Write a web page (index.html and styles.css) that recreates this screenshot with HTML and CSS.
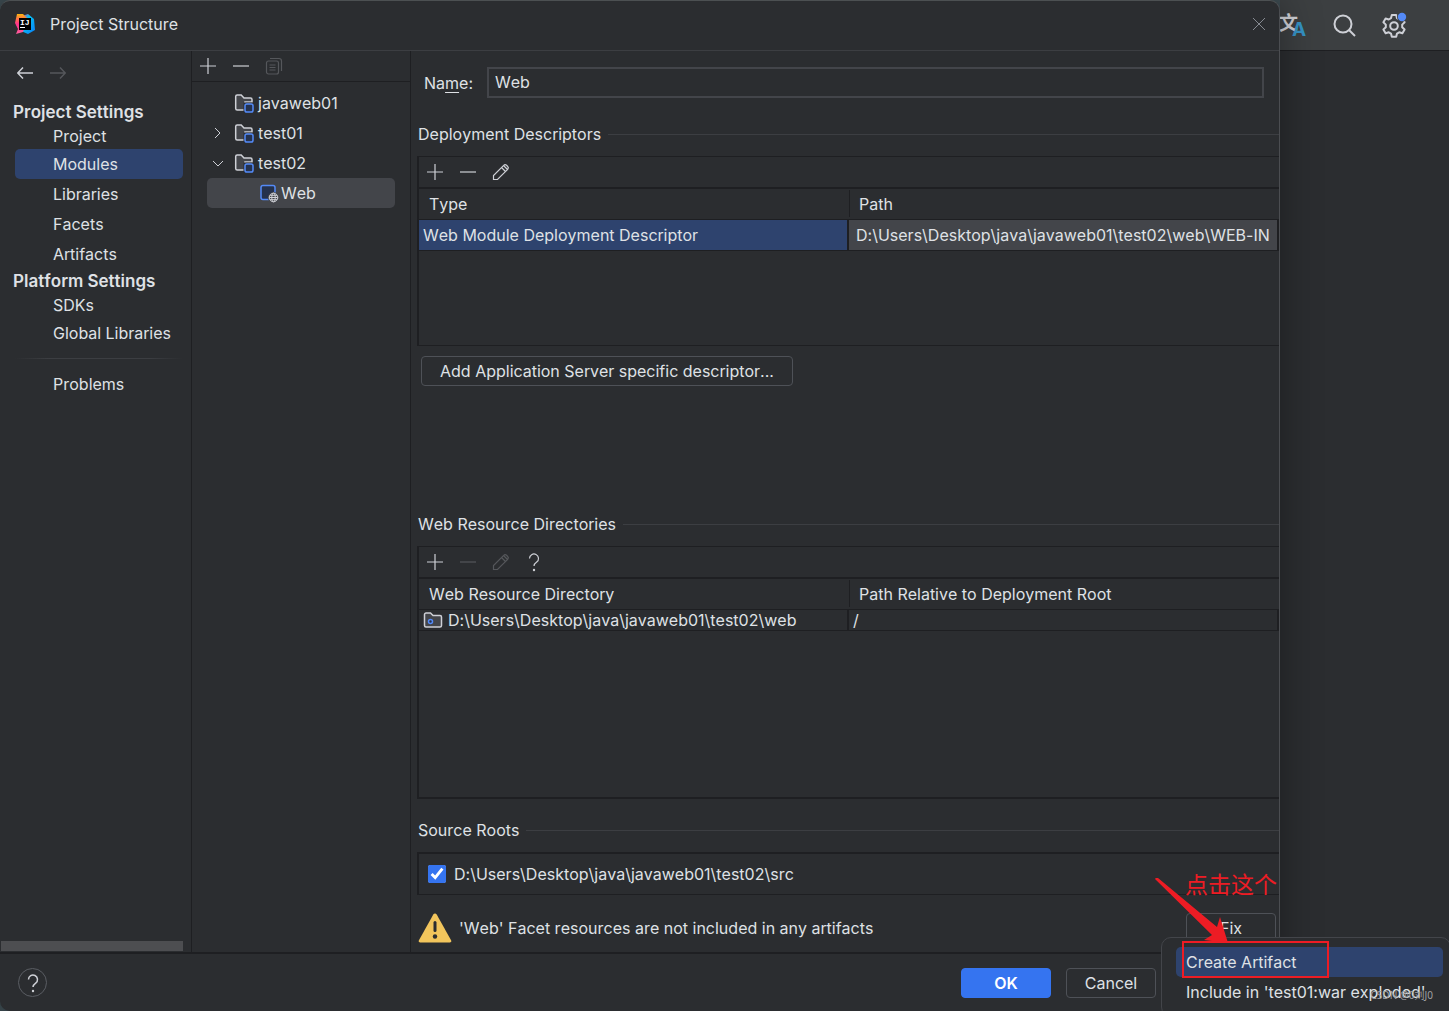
FILE: index.html
```html
<!DOCTYPE html>
<html lang="en">
<head>
<meta charset="utf-8">
<title>Project Structure</title>
<link rel="stylesheet" href="styles.css">
</head>
<body>
<svg class="sprite" aria-hidden="true">
  <symbol id="plus" viewBox="0 0 20 20"><path d="M10 2v16M2 10h16"/></symbol>
  <symbol id="minus" viewBox="0 0 20 20"><path d="M2 10h16"/></symbol>
  <symbol id="copy" viewBox="0 0 20 20"><rect x="2.500" y="5" width="12" height="13" rx="2"/><path d="M6 2.500h9a2.500 2.500 0 0 1 2.500 2.500v10M5.500 9h6M5.500 11.500h6M5.500 14h6"/></symbol>
  <symbol id="pencil" viewBox="0 0 20 20"><path d="M2.500 17.500v-4L12.700 3.300a2 2 0 0 1 2.800 0l1.200 1.200a2 2 0 0 1 0 2.800L6.500 17.500zM10.500 5.500l4 4M12.500 3.500l4 4" /></symbol>
  <symbol id="module" viewBox="0 0 20 20"><path class="folder" d="M1.700 15.500v-12a1.500 1.500 0 0 1 1.500-1.500h4l2.800 3h6.500a1.500 1.500 0 0 1 1.500 1.500V9h-7v8H3.200a1.500 1.500 0 0 1-1.500-1.500z"/><rect x="9.500" y="9.500" width="10.500" height="10.500" fill="#2b2d30" stroke="none"/><rect class="blue" x="11" y="11" width="8" height="8" rx="1.800"/></symbol>
  <symbol id="webdir" viewBox="0 0 20 20"><path class="folder" d="M1.500 15.500v-11a1.500 1.500 0 0 1 1.500-1.500h4.500l2.500 2.500h7a1.500 1.500 0 0 1 1.500 1.500v8.500a1.500 1.500 0 0 1-1.500 1.500H3a1.500 1.500 0 0 1-1.500-1.500z"/><circle class="blue" cx="7.500" cy="11.500" r="2"/></symbol>
  <symbol id="facet" viewBox="0 0 20 20"><rect class="blue" x="2" y="2.500" width="14" height="14" rx="2"/><circle cx="14.500" cy="14.500" r="5.500" fill="#43454a" stroke="none"/><circle cx="14.500" cy="14.500" r="4.300" fill="#43454a"/><ellipse cx="14.500" cy="14.500" rx="1.800" ry="4.300"/><path d="M10.200 14.500h8.600M11 12.300h7M11 16.700h7"/></symbol>
  <symbol id="question" viewBox="0 0 20 20"><path d="M5.500 6.500a4.500 4.500 0 1 1 7.200 3.600C11 11.300 10 12 10 14"/><circle class="dot" cx="10" cy="18" r="1.200"/></symbol>
</svg>

<div class="screen">
  <section class="dialog" aria-label="Project Structure">
    <header class="titlebar">
      <svg class="logo" viewBox="0 0 22 22" aria-hidden="true">
        <defs><linearGradient id="warm" x1="0" y1="0" x2="0" y2="1"><stop offset="0" stop-color="#fdb60d"/><stop offset=".5" stop-color="#ff318c"/><stop offset="1" stop-color="#fe5f9b"/></linearGradient><linearGradient id="cool" x1="0" y1="0" x2="1" y2="1"><stop offset="0" stop-color="#ff318c"/><stop offset=".35" stop-color="#07c3f2"/><stop offset="1" stop-color="#087cfa"/></linearGradient></defs>
        <path fill="url(#cool)" d="M8 3l6-2 6 5 1 11-7 4-7-3z"/>
        <path fill="url(#warm)" d="M3 1h6l5 5-5 13-7 2 2-5-3-6z"/>
        <path fill="#000" d="M5 5h12v12H5z"/>
        <path fill="#fff" d="M6 14h5v1H6z"/>
        <text x="6" y="12" fill="#fff">IJ</text>
      </svg>
      <h1>Project Structure</h1>
      <button class="close" aria-label="Close"><svg viewBox="0 0 12 12"><path d="M0 0l12 12M12 0L0 12"/></svg></button>
    </header>

    <div class="body">
      <nav class="sidebar" aria-label="Settings">
        <div class="history">
          <button aria-label="Back"><svg viewBox="0 0 16 12"><path d="M16 6H1M6 .5L.7 6 6 11.500"/></svg></button>
          <button aria-label="Forward" disabled><svg viewBox="0 0 16 12"><path d="M0 6h15M10 .5L15.300 6 10 11.500"/></svg></button>
        </div>
        <h2>Project Settings</h2>
        <ul>
          <li><a href="#project">Project</a></li>
          <li><a href="#modules" class="selected">Modules</a></li>
          <li><a href="#libraries">Libraries</a></li>
          <li><a href="#facets">Facets</a></li>
          <li><a href="#artifacts">Artifacts</a></li>
        </ul>
        <h2>Platform Settings</h2>
        <ul>
          <li><a href="#sdks">SDKs</a></li>
          <li><a href="#global">Global Libraries</a></li>
        </ul>
        <hr>
        <a href="#problems">Problems</a>
        <div class="scroll-thumb"></div>
      </nav>

      <section class="modules" aria-label="Modules">
        <div class="toolbar">
          <button aria-label="Add"><svg><use href="#plus"/></svg></button>
          <button aria-label="Remove"><svg><use href="#minus"/></svg></button>
          <button aria-label="Copy" disabled><svg><use href="#copy"/></svg></button>
        </div>
        <ul class="tree">
          <li><span class="chevron"></span><svg><use href="#module"/></svg>javaweb01</li>
          <li><svg class="chevron" viewBox="0 0 12 12"><path d="M3 1l5 5-5 5"/></svg><svg><use href="#module"/></svg>test01</li>
          <li><svg class="chevron" viewBox="0 0 12 12"><path d="M1 4l5 5 5-5"/></svg><svg><use href="#module"/></svg>test02</li>
          <li class="leaf selected"><svg><use href="#facet"/></svg>Web</li>
        </ul>
      </section>

      <main class="editor">
        <div class="name-row">
          <label for="name">Na<u>m</u>e:</label>
          <input id="name" type="text" value="Web">
        </div>

        <section class="descriptors">
          <h3>Deployment Descriptors</h3>
          <div class="panel">
            <div class="toolbar">
              <button aria-label="Add"><svg><use href="#plus"/></svg></button>
              <button aria-label="Remove"><svg><use href="#minus"/></svg></button>
              <button aria-label="Edit"><svg><use href="#pencil"/></svg></button>
            </div>
            <table>
              <thead><tr><th>Type</th><th>Path</th></tr></thead>
              <tbody><tr class="current"><td>Web Module Deployment Descriptor</td><td>D:\Users\Desktop\java\javaweb01\test02\web\WEB-IN</td></tr></tbody>
            </table>
          </div>
          <button class="btn wide">Add Application Server specific descriptor...</button>
        </section>

        <section class="resources">
          <h3>Web Resource Directories</h3>
          <div class="panel">
            <div class="toolbar">
              <button aria-label="Add"><svg><use href="#plus"/></svg></button>
              <button aria-label="Remove" disabled><svg><use href="#minus"/></svg></button>
              <button aria-label="Edit" disabled><svg><use href="#pencil"/></svg></button>
              <button aria-label="Help"><svg><use href="#question"/></svg></button>
            </div>
            <table class="compact">
              <thead><tr><th>Web Resource Directory</th><th>Path Relative to Deployment Root</th></tr></thead>
              <tbody><tr><td><svg><use href="#webdir"/></svg>D:\Users\Desktop\java\javaweb01\test02\web</td><td>/</td></tr></tbody>
            </table>
          </div>
        </section>

        <section class="roots">
          <h3>Source Roots</h3>
          <div class="panel">
            <label><input type="checkbox" checked>D:\Users\Desktop\java\javaweb01\test02\src</label>
          </div>
        </section>

        <div class="warning">
          <svg viewBox="0 0 34 30" aria-hidden="true"><path fill="#f2c55c" d="M15.300 1.500a2 2 0 0 1 3.400 0l14.500 26a1.500 1.500 0 0 1-1.300 2H2.100a1.500 1.500 0 0 1-1.300-2z"/><path d="M17 9.500v8" stroke="#2b2d30" stroke-width="3" stroke-linecap="round"/><circle cx="17" cy="23.500" r="2.200" fill="#2b2d30"/></svg>
          <span>'Web' Facet resources are not included in any artifacts</span>
          <button class="btn">Fix</button>
        </div>
      </main>
    </div>

    <footer class="footer">
      <button class="help" aria-label="Help"><svg><use href="#question"/></svg></button>
      <button class="btn primary">OK</button>
      <button class="btn">Cancel</button>
    </footer>
  </section>

  <aside class="ide">
    <div class="ide-toolbar">
      <button aria-label="Translate"><svg viewBox="0 0 28 28"><text class="han" x="-1" y="19">文</text><text class="latin" x="12" y="25">A</text></svg></button>
      <button aria-label="Search"><svg viewBox="0 0 28 28"><circle cx="13" cy="13" r="8.500"/><path d="M19 19l6 6"/></svg></button>
      <button aria-label="Settings"><svg viewBox="0 0 28 28"><path stroke-linejoin="round" d="M11.800 4h4.400l.8 3.200 2.200 1.300 3.200-1 2.200 3.800-2.400 2.300v2.600l2.400 2.300-2.200 3.800-3.200-1-2.200 1.300-.8 3.200h-4.400l-.8-3.200-2.200-1.300-3.200 1-2.200-3.800 2.400-2.300v-2.600L3.400 11.300l2.200-3.800 3.200 1L11 7.200z"/><circle cx="14" cy="15" r="3.800"/><circle cx="22" cy="6" r="5" fill="#3c3f41" stroke="none"/><circle cx="22" cy="6" r="4.200" fill="#548af7" stroke="none"/></svg></button>
    </div>
  </aside>

  <div class="menu" role="menu">
    <button class="selected" role="menuitem">Create Artifact</button>
    <button role="menuitem">Include in 'test01:war exploded'</button>
  </div>

  <div class="note">
    <span>点击这个</span>
    <svg viewBox="0 0 74 66" aria-hidden="true"><path fill="#ed1c24" d="M0 1q1-2 3-1l59 49 3-10 8 26-24-3 8-5z"/></svg>
    <div class="frame"></div>
  </div>
  <span class="watermark">CSDN @0刘J0</span>
</div>
</body>
</html>
```

FILE: styles.css
```css
* { box-sizing: border-box; }

body {
  margin: 0;
  background: #2b2d30;
  color: #dfe1e5;
  font: 16px/20px Inter, "Noto Sans CJK SC", sans-serif;
  font-kerning: none;
  font-feature-settings: "calt" 0;
}

h1, h2, h3, ul { margin: 0; padding: 0; font-size: 16px; font-weight: 400; }
ul { list-style: none; }
a { color: inherit; text-decoration: none; }
button { padding: 0; border: 0; background: none; color: inherit; font: inherit; font-kerning: none; }
svg { display: block; fill: none; stroke: #ced0d6; flex: none; }
.sprite { position: absolute; width: 0; height: 0; }
.folder { fill: #43454a; stroke-width: 1.500; }
.blue { fill: #25324d; stroke: #548af7; stroke-width: 1.500; }
.dot { fill: #ced0d6; stroke: none; }

.screen {
  position: relative;
  display: flex;
  min-height: 100vh;
  overflow: hidden;
  background: #3c4a50;
}

/* Dialog window */
.dialog {
  position: relative;
  flex: 1;
  min-width: 0;
  display: flex;
  flex-direction: column;
  border-top: 1px solid #4c5052;
  border-right: 1px solid #4b4d51;
  border-radius: 10px 10px 0 10px;
  background: #2b2d30;
  box-shadow: 0 0 40px rgba(0, 0, 0, .35);
  z-index: 1;
}

.titlebar {
  display: flex;
  align-items: center;
  height: 50px;
  padding: 0 14px 3px;
  gap: 14px;
  border-bottom: 1px solid #3c3e42;
}
.titlebar h1 { flex: 1; }
.logo { width: 22px; height: 22px; stroke: none; }
.logo text { font: bold 8px "Liberation Mono", monospace; }
.close svg { width: 12px; height: 12px; stroke: #868a91; }

.body { flex: 1; display: flex; border-bottom: 2px solid #1e1f22; }

/* Settings navigation */
.sidebar {
  width: 192px;
  display: flex;
  flex-direction: column;
  border-right: 1px solid #1e1f22;
}
.history { display: flex; align-items: flex-start; gap: 17px; height: 49px; padding: 16px 17px; }
.history svg { width: 16px; height: 12px; stroke-width: 1.500; }
button:disabled svg { stroke: #55575b; }
.sidebar h2 { padding-left: 13px; font-size: 17px; line-height: 24px; font-weight: 600; }
.sidebar a {
  display: block;
  margin: 0 8px 0 15px;
  padding-left: 38px;
  border-radius: 5px;
  line-height: 30px;
}
.sidebar li:first-child a { line-height: 25px; }
.sidebar .selected { background: #2e436e; }
.sidebar hr {
  width: 168px;
  height: 1px;
  margin: 10px 8px 10px 15px;
  border: 0;
  background: linear-gradient(90deg, transparent, #3c3e42 20%, #3c3e42 80%, transparent);
}
.scroll-thumb { height: 10px; margin: auto 8px 1px 1px; background: #4d4e51; }

/* Module tree */
.modules { width: 219px; border-right: 1px solid #1e1f22; }
.toolbar { display: flex; height: 31px; border-bottom: 1px solid #1e1f22; }
.toolbar button { width: 33px; padding-right: 2px; display: grid; place-items: center; }
.toolbar svg { width: 20px; height: 20px; stroke-width: 1.200; }
.tree { padding: 6px 15px; }
.tree li {
  display: flex;
  align-items: center;
  gap: 4px;
  height: 30px;
  padding-left: 5px;
  border-radius: 5px;
}
.tree svg { width: 20px; height: 20px; }
.tree .chevron { width: 12px; height: 12px; margin-right: 6px; }
.tree .leaf { padding-left: 52px; gap: 2px; }
.tree .selected { background: #43454a; }

/* Facet editor */
.editor { flex: 1; min-width: 0; display: flex; flex-direction: column; padding-left: 6px; }
.name-row {
  display: flex;
  align-items: center;
  gap: 14px;
  padding: 16px 15px 26px 7px;
}
.name-row input {
  flex: 1;
  min-width: 0;
  height: 31px;
  padding: 0 6px 1px;
  border: 2px solid #43454a;
  background: none;
  color: inherit;
  font: inherit;
}
u { text-underline-offset: 3px; }
h3 { display: flex; align-items: center; gap: 7px; margin-bottom: 12px; padding-left: 1px; }
h3::after { content: ""; flex: 1; height: 1px; background: #3c3e42; }
.panel { border: solid #1e1f22; border-width: 1px 0 1px 2px; }
.panel .toolbar { height: 32px; border-bottom-width: 2px; }
.descriptors { padding-bottom: 128px; }
.descriptors .panel { min-height: 190px; }
.resources { flex: 1; display: flex; flex-direction: column; }
.resources .panel { flex: 1; border-bottom-width: 2px; }

table { width: 100%; table-layout: fixed; border-spacing: 0; }
th, td { padding: 0; border-bottom: 1px solid #1e1f22; text-align: left; white-space: nowrap; overflow: hidden; }
th { height: 31px; padding-left: 10px; font-weight: 400; }
th + th { background: linear-gradient(#1e1f22, #1e1f22) no-repeat 0 1px / 1px 27px; }
td { height: 31px; padding-left: 4px; border-right: 2px solid #1e1f22; }
td + td { padding-left: 7px; }
.current td { background: #2e436e; }
.current td + td { background: #43454a; }
.compact td { height: 21px; line-height: 20px; }
.compact td + td { padding-left: 4px; }
td svg { display: inline-block; width: 20px; height: 20px; margin-right: 5px; vertical-align: top; }

.btn {
  min-width: 90px;
  height: 30px;
  border: 1px solid #4e5157;
  border-radius: 4px;
  text-align: center;
}
.wide { display: block; margin: 10px 0 0 4px; padding: 0 18px; }
.primary { border-color: #3574f0; background: #3574f0; color: #fff; font-weight: 600; }

.roots { padding-top: 21px; }
.roots .panel { border-top-width: 2px; }
.roots label { display: flex; align-items: center; gap: 8px; height: 40px; padding-left: 9px; }
.roots input {
  width: 18px;
  height: 18px;
  margin: 0;
  accent-color: #3574f0;
}
.warning { display: flex; align-items: center; gap: 7px; height: 57px; padding: 8px 3px 0 1px; }
.warning svg { width: 34px; height: 30px; stroke: none; }
.warning span { flex: 1; }

.footer { display: flex; align-items: center; gap: 15px; height: 57px; padding: 0 123px 0 18px; }
.help {
  display: grid;
  place-items: center;
  width: 29px;
  height: 29px;
  margin-right: auto;
  border: 1px solid #5a5d63;
  border-radius: 50%;
}
.help svg { width: 20px; height: 20px; stroke-width: 1.500; }

/* IDE window behind the dialog */
.ide { width: 169px; background: #2b2d30; }
.ide-toolbar {
  display: flex;
  align-items: center;
  gap: 22px;
  height: 51px;
  border-bottom: 1px solid #1e1f22;
  background: #3c3f41;
}
.ide-toolbar svg { width: 28px; height: 28px; stroke-width: 2; }
.ide-toolbar text { stroke: none; fill: #ced0d6; font: bold 19px "Noto Sans CJK SC", sans-serif; }
.ide-toolbar .latin { fill: #3592c4; font: bold 19px Inter, sans-serif; }

/* Quick-fix popup */
.menu {
  position: absolute;
  right: -2px;
  bottom: -6px;
  width: 290px;
  padding: 9px 7px 9px 14px;
  border: 1px solid #43454a;
  border-radius: 10px;
  background: #2b2d30;
  z-index: 2;
}
.menu button { display: block; width: 100%; height: 30px; padding-left: 10px; border-radius: 5px; text-align: left; }
.menu .selected { background: #2e436e; }

.note { position: absolute; right: 120px; bottom: 33px; width: 174px; height: 105px; z-index: 3; color: #ed1c24; }
.note span { position: absolute; left: 30px; top: 0; font-size: 23px; line-height: 24px; white-space: nowrap; }
.note svg { position: absolute; left: 0; top: 5px; width: 74px; height: 66px; stroke: none; }
.frame { position: absolute; right: 0; bottom: 0; width: 147px; height: 37px; border: 2px solid #ed1c24; }
.watermark { position: absolute; right: 16px; bottom: 8px; z-index: 3; color: #a0a1a3; font: 10px/16px "Noto Sans", "Noto Sans CJK SC", sans-serif; }
```
